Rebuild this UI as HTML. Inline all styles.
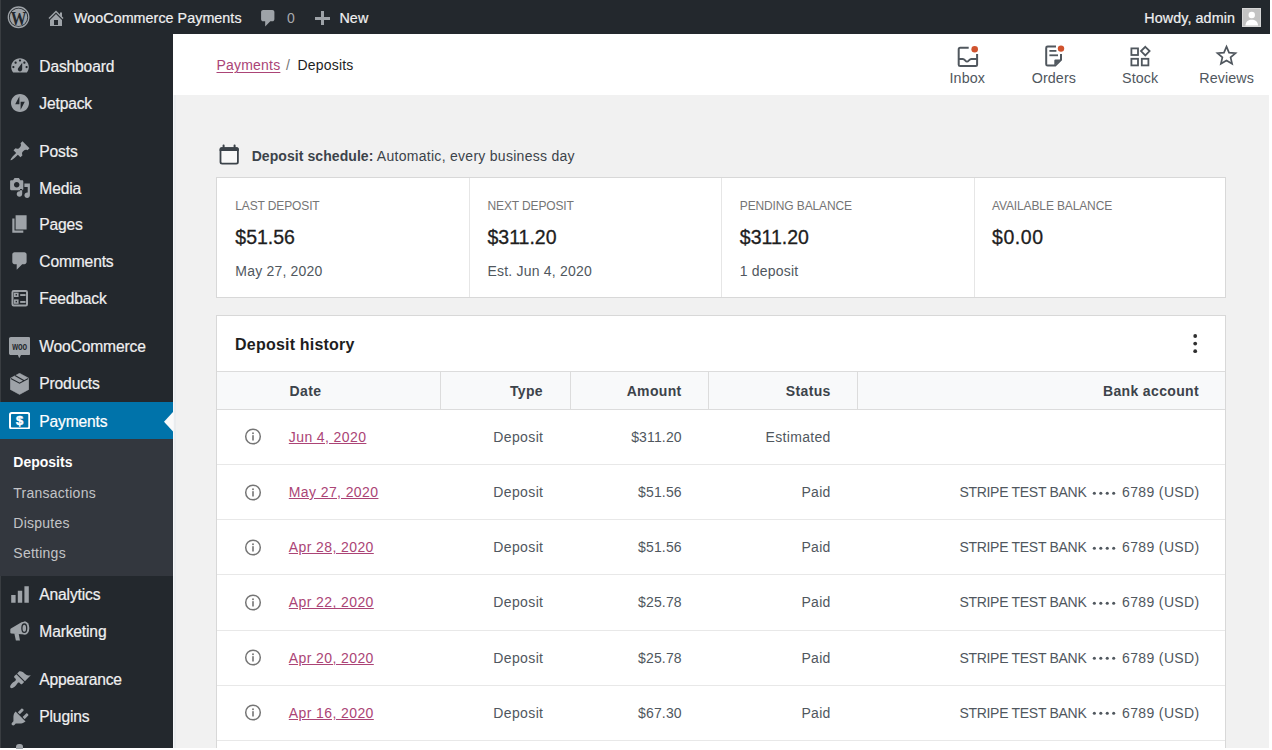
<!DOCTYPE html>
<html><head><meta charset="utf-8"><style>
html,body{margin:0;padding:0;width:1272px;height:750px;overflow:hidden;background:#fff;font-family:"Liberation Sans", sans-serif;}
.t{position:absolute;white-space:nowrap;}
.r{position:absolute;}
</style></head><body>
<div class="r" style="left:0px;top:0px;width:1272px;height:750px;background:#fff"></div>
<div class="r" style="left:0px;top:0px;width:1269px;height:748px;background:#f1f1f1"></div>
<div class="r" style="left:0px;top:0px;width:1270px;height:34px;background:#23282d"></div>
<div class="r" style="left:0px;top:34px;width:173px;height:714px;background:#23282d"></div>
<div class="r" style="left:173px;top:34px;width:1px;height:714px;background:#f5f7f9"></div>
<div class="r" style="left:174px;top:94px;width:2px;height:654px;background:#eaecee"></div>
<div class="r" style="left:0px;top:0px;width:1px;height:748px;background:#393d41"></div>
<div class="r" style="left:173px;top:34px;width:1097px;height:61px;background:#fff"></div>
<div class="t" style="left:74px;top:10.07px;font-size:14.3px;line-height:17.16px;color:#f0f0f1;font-weight:normal;letter-spacing:0.05px;-webkit-text-stroke:0.2px currentColor;">WooCommerce Payments</div>
<div class="t" style="left:287px;top:10.35px;font-size:14px;line-height:16.8px;color:#a7aaad;font-weight:normal;letter-spacing:0px;">0</div>
<div class="t" style="left:339.5px;top:10.07px;font-size:14.3px;line-height:17.16px;color:#f0f0f1;font-weight:normal;letter-spacing:0.05px;-webkit-text-stroke:0.2px currentColor;">New</div>
<div class="t" style="right:37px;text-align:right;top:10.07px;font-size:14.3px;line-height:17.16px;color:#f0f0f1;font-weight:normal;letter-spacing:0.1px;-webkit-text-stroke:0.2px currentColor;">Howdy, admin</div>
<div class="r" style="left:0px;top:402px;width:173px;height:37px;background:#0073aa"></div>
<div class="r" style="left:0px;top:439px;width:173px;height:137px;background:#33373e"></div>
<div class="t" style="left:39.3px;top:57.73px;font-size:15.6px;line-height:18.72px;color:#f0f0f1;font-weight:normal;letter-spacing:-0.15px;-webkit-text-stroke:0.2px currentColor;">Dashboard</div>
<div class="t" style="left:39.3px;top:94.53px;font-size:15.6px;line-height:18.72px;color:#f0f0f1;font-weight:normal;letter-spacing:-0.15px;-webkit-text-stroke:0.2px currentColor;">Jetpack</div>
<div class="t" style="left:39.3px;top:142.53px;font-size:15.6px;line-height:18.72px;color:#f0f0f1;font-weight:normal;letter-spacing:-0.15px;-webkit-text-stroke:0.2px currentColor;">Posts</div>
<div class="t" style="left:39.3px;top:179.73px;font-size:15.6px;line-height:18.72px;color:#f0f0f1;font-weight:normal;letter-spacing:-0.15px;-webkit-text-stroke:0.2px currentColor;">Media</div>
<div class="t" style="left:39.3px;top:215.93px;font-size:15.6px;line-height:18.72px;color:#f0f0f1;font-weight:normal;letter-spacing:-0.15px;-webkit-text-stroke:0.2px currentColor;">Pages</div>
<div class="t" style="left:39.3px;top:252.63px;font-size:15.6px;line-height:18.72px;color:#f0f0f1;font-weight:normal;letter-spacing:-0.15px;-webkit-text-stroke:0.2px currentColor;">Comments</div>
<div class="t" style="left:39.3px;top:289.63px;font-size:15.6px;line-height:18.72px;color:#f0f0f1;font-weight:normal;letter-spacing:-0.15px;-webkit-text-stroke:0.2px currentColor;">Feedback</div>
<div class="t" style="left:39.3px;top:338.43px;font-size:15.6px;line-height:18.72px;color:#f0f0f1;font-weight:normal;letter-spacing:-0.15px;-webkit-text-stroke:0.2px currentColor;">WooCommerce</div>
<div class="t" style="left:39.3px;top:374.83px;font-size:15.6px;line-height:18.72px;color:#f0f0f1;font-weight:normal;letter-spacing:-0.15px;-webkit-text-stroke:0.2px currentColor;">Products</div>
<div class="t" style="left:39.3px;top:412.73px;font-size:15.6px;line-height:18.72px;color:#fff;font-weight:normal;letter-spacing:-0.15px;-webkit-text-stroke:0.2px currentColor;">Payments</div>
<div class="t" style="left:13.3px;top:454.25px;font-size:14px;line-height:16.8px;color:#fff;font-weight:bold;letter-spacing:0px;">Deposits</div>
<div class="t" style="left:13.3px;top:484.65px;font-size:14px;line-height:16.8px;color:#c3c4c7;font-weight:normal;letter-spacing:0.25px;">Transactions</div>
<div class="t" style="left:13.3px;top:515.35px;font-size:14px;line-height:16.8px;color:#c3c4c7;font-weight:normal;letter-spacing:0.25px;">Disputes</div>
<div class="t" style="left:13.3px;top:545.45px;font-size:14px;line-height:16.8px;color:#c3c4c7;font-weight:normal;letter-spacing:0.25px;">Settings</div>
<div class="t" style="left:39.3px;top:585.93px;font-size:15.6px;line-height:18.72px;color:#f0f0f1;font-weight:normal;letter-spacing:-0.15px;-webkit-text-stroke:0.2px currentColor;">Analytics</div>
<div class="t" style="left:39.3px;top:622.63px;font-size:15.6px;line-height:18.72px;color:#f0f0f1;font-weight:normal;letter-spacing:-0.15px;-webkit-text-stroke:0.2px currentColor;">Marketing</div>
<div class="t" style="left:39.3px;top:671.13px;font-size:15.6px;line-height:18.72px;color:#f0f0f1;font-weight:normal;letter-spacing:-0.15px;-webkit-text-stroke:0.2px currentColor;">Appearance</div>
<div class="t" style="left:39.3px;top:708.33px;font-size:15.6px;line-height:18.72px;color:#f0f0f1;font-weight:normal;letter-spacing:-0.15px;-webkit-text-stroke:0.2px currentColor;">Plugins</div>
<div class="t" style="left:216.5px;top:57.35px;font-size:14px;line-height:16.8px;color:#ab4476;font-weight:normal;letter-spacing:0.2px;text-decoration:underline;text-underline-offset:2px;">Payments</div>
<div class="t" style="left:286px;top:57.35px;font-size:14px;line-height:16.8px;color:#757575;font-weight:normal;letter-spacing:0px;">/</div>
<div class="t" style="left:297.5px;top:57.35px;font-size:14px;line-height:16.8px;color:#1e1e1e;font-weight:normal;letter-spacing:0.2px;">Deposits</div>
<div class="t" style="left:867.3px;width:200px;text-align:center;top:70.47px;font-size:14.3px;line-height:17.16px;color:#50575e;font-weight:normal;letter-spacing:0.1px;">Inbox</div>
<div class="t" style="left:953.9000000000001px;width:200px;text-align:center;top:70.47px;font-size:14.3px;line-height:17.16px;color:#50575e;font-weight:normal;letter-spacing:0.1px;">Orders</div>
<div class="t" style="left:1040.15px;width:200px;text-align:center;top:70.47px;font-size:14.3px;line-height:17.16px;color:#50575e;font-weight:normal;letter-spacing:0.1px;">Stock</div>
<div class="t" style="left:1126.7px;width:200px;text-align:center;top:70.47px;font-size:14.3px;line-height:17.16px;color:#50575e;font-weight:normal;letter-spacing:0.1px;">Reviews</div>
<div class="t" style="left:251.7px;top:147.95px;font-size:14px;line-height:16.8px;color:#3c434a;font-weight:normal;letter-spacing:0.28px;"><b style="letter-spacing:0.07px">Deposit schedule:</b> Automatic, every business day</div>
<div class="r" style="left:216px;top:177px;width:1010px;height:121px;background:#fff;border:1px solid #d8d8d8;box-sizing:border-box"></div>
<div class="r" style="left:469px;top:178px;width:1px;height:119px;background:#e6e6e6"></div>
<div class="r" style="left:721px;top:178px;width:1px;height:119px;background:#e6e6e6"></div>
<div class="r" style="left:974px;top:178px;width:1px;height:119px;background:#e6e6e6"></div>
<div class="t" style="left:235.3px;top:199.24px;font-size:12px;line-height:14.4px;color:#757575;font-weight:normal;letter-spacing:-0.13px;">LAST DEPOSIT</div>
<div class="t" style="left:235.3px;top:226.14px;font-size:19.5px;line-height:23.4px;color:#1e1e1e;font-weight:normal;letter-spacing:0px;-webkit-text-stroke:0.3px #1e1e1e;">$51.56</div>
<div class="t" style="left:235.3px;top:262.75px;font-size:14px;line-height:16.8px;color:#50575e;font-weight:normal;letter-spacing:0.2px;">May 27, 2020</div>
<div class="t" style="left:487.5px;top:199.24px;font-size:12px;line-height:14.4px;color:#757575;font-weight:normal;letter-spacing:-0.13px;">NEXT DEPOSIT</div>
<div class="t" style="left:487.5px;top:226.14px;font-size:19.5px;line-height:23.4px;color:#1e1e1e;font-weight:normal;letter-spacing:0px;-webkit-text-stroke:0.3px #1e1e1e;">$311.20</div>
<div class="t" style="left:487.5px;top:262.75px;font-size:14px;line-height:16.8px;color:#50575e;font-weight:normal;letter-spacing:0.2px;">Est. Jun 4, 2020</div>
<div class="t" style="left:739.8px;top:199.24px;font-size:12px;line-height:14.4px;color:#757575;font-weight:normal;letter-spacing:-0.13px;">PENDING BALANCE</div>
<div class="t" style="left:739.8px;top:226.14px;font-size:19.5px;line-height:23.4px;color:#1e1e1e;font-weight:normal;letter-spacing:0px;-webkit-text-stroke:0.3px #1e1e1e;">$311.20</div>
<div class="t" style="left:739.8px;top:262.75px;font-size:14px;line-height:16.8px;color:#50575e;font-weight:normal;letter-spacing:0.2px;">1 deposit</div>
<div class="t" style="left:992px;top:199.24px;font-size:12px;line-height:14.4px;color:#757575;font-weight:normal;letter-spacing:-0.13px;">AVAILABLE BALANCE</div>
<div class="t" style="left:992px;top:226.14px;font-size:19.5px;line-height:23.4px;color:#1e1e1e;font-weight:normal;letter-spacing:0.55px;-webkit-text-stroke:0.3px #1e1e1e;">$0.00</div>
<div class="r" style="left:216px;top:315px;width:1010px;height:433px;background:#fff;border:1px solid #d8d8d8;border-bottom:none;box-sizing:border-box"></div>
<div class="t" style="left:235.1px;top:335.36px;font-size:16px;line-height:19.2px;color:#1e1e1e;font-weight:bold;letter-spacing:0.2px;">Deposit history</div>
<svg class="r" style="left:1185px;top:325px;" width="20" height="35" viewBox="0 0 20 35"><circle cx="10.2" cy="11" r="1.9" fill="#2f2f2f"/><circle cx="10.2" cy="18.6" r="1.9" fill="#2f2f2f"/><circle cx="10.2" cy="26.2" r="1.9" fill="#2f2f2f"/></svg>
<div class="r" style="left:217px;top:371px;width:1008px;height:39px;background:#f8f9fa;border-top:1px solid #dcdcdc;border-bottom:1px solid #dcdcdc;box-sizing:border-box"></div>
<div class="r" style="left:440px;top:372px;width:1px;height:37px;background:#dcdcdc"></div>
<div class="r" style="left:570px;top:372px;width:1px;height:37px;background:#dcdcdc"></div>
<div class="r" style="left:708px;top:372px;width:1px;height:37px;background:#dcdcdc"></div>
<div class="r" style="left:857px;top:372px;width:1px;height:37px;background:#dcdcdc"></div>
<div class="t" style="left:289.6px;top:383.35px;font-size:14px;line-height:16.8px;color:#3c434a;font-weight:bold;letter-spacing:0.4px;">Date</div>
<div class="t" style="right:729px;text-align:right;top:383.35px;font-size:14px;line-height:16.8px;color:#3c434a;font-weight:bold;letter-spacing:0.35px;">Type</div>
<div class="t" style="right:590.4px;text-align:right;top:383.35px;font-size:14px;line-height:16.8px;color:#3c434a;font-weight:bold;letter-spacing:0.35px;">Amount</div>
<div class="t" style="right:441.29999999999995px;text-align:right;top:383.35px;font-size:14px;line-height:16.8px;color:#3c434a;font-weight:bold;letter-spacing:0.35px;">Status</div>
<div class="t" style="right:73px;text-align:right;top:383.35px;font-size:14px;line-height:16.8px;color:#3c434a;font-weight:bold;letter-spacing:0.35px;">Bank account</div>
<svg class="r" style="left:244px;top:428.3px;" width="18" height="18" viewBox="0 0 18 18"><circle cx="9" cy="8.5" r="7.3" fill="none" stroke="#757575" stroke-width="1.5"/><rect x="8.2" y="7.2" width="1.6" height="5.3" fill="#757575"/><circle cx="9" cy="5.2" r="0.95" fill="#757575"/></svg>
<div class="t" style="left:288.8px;top:428.75px;font-size:14px;line-height:16.8px;color:#ab4476;font-weight:normal;letter-spacing:0.4px;text-decoration:underline;text-underline-offset:1px;">Jun 4, 2020</div>
<div class="t" style="right:728.63px;text-align:right;top:428.75px;font-size:14px;line-height:16.8px;color:#50575e;font-weight:normal;letter-spacing:0.37px;">Deposit</div>
<div class="t" style="right:590.26px;text-align:right;top:428.75px;font-size:14px;line-height:16.8px;color:#50575e;font-weight:normal;letter-spacing:0.14px;">$311.20</div>
<div class="t" style="right:441.28px;text-align:right;top:428.75px;font-size:14px;line-height:16.8px;color:#50575e;font-weight:normal;letter-spacing:0.32px;">Estimated</div>
<div class="r" style="left:217px;top:464px;width:1008px;height:1px;background:#e8e8e8"></div>
<svg class="r" style="left:244px;top:483.5px;" width="18" height="18" viewBox="0 0 18 18"><circle cx="9" cy="8.5" r="7.3" fill="none" stroke="#757575" stroke-width="1.5"/><rect x="8.2" y="7.2" width="1.6" height="5.3" fill="#757575"/><circle cx="9" cy="5.2" r="0.95" fill="#757575"/></svg>
<div class="t" style="left:288.8px;top:483.95px;font-size:14px;line-height:16.8px;color:#ab4476;font-weight:normal;letter-spacing:0.4px;text-decoration:underline;text-underline-offset:1px;">May 27, 2020</div>
<div class="t" style="right:728.63px;text-align:right;top:483.95px;font-size:14px;line-height:16.8px;color:#50575e;font-weight:normal;letter-spacing:0.37px;">Deposit</div>
<div class="t" style="right:590.26px;text-align:right;top:483.95px;font-size:14px;line-height:16.8px;color:#50575e;font-weight:normal;letter-spacing:0.14px;">$51.56</div>
<div class="t" style="right:441.28px;text-align:right;top:483.95px;font-size:14px;line-height:16.8px;color:#50575e;font-weight:normal;letter-spacing:0.32px;">Paid</div>
<div class="t" style="left:959.4px;top:483.95px;font-size:14px;line-height:16.8px;color:#50575e;font-weight:normal;letter-spacing:-0.29px;">STRIPE TEST BANK</div>
<div class="t" style="right:72.44000000000005px;text-align:right;top:483.95px;font-size:14px;line-height:16.8px;color:#50575e;font-weight:normal;letter-spacing:0.36px;">6789 (USD)</div>
<svg class="r" style="left:1090px;top:487.5px;" width="30" height="9" viewBox="0 0 30 9"><circle cx="4.35" cy="5.2" r="1.55" fill="#50575e"/><circle cx="10.80" cy="5.2" r="1.55" fill="#50575e"/><circle cx="17.25" cy="5.2" r="1.55" fill="#50575e"/><circle cx="23.70" cy="5.2" r="1.55" fill="#50575e"/></svg>
<div class="r" style="left:217px;top:519px;width:1008px;height:1px;background:#e8e8e8"></div>
<svg class="r" style="left:244px;top:538.6999999999999px;" width="18" height="18" viewBox="0 0 18 18"><circle cx="9" cy="8.5" r="7.3" fill="none" stroke="#757575" stroke-width="1.5"/><rect x="8.2" y="7.2" width="1.6" height="5.3" fill="#757575"/><circle cx="9" cy="5.2" r="0.95" fill="#757575"/></svg>
<div class="t" style="left:288.8px;top:539.15px;font-size:14px;line-height:16.8px;color:#ab4476;font-weight:normal;letter-spacing:0.4px;text-decoration:underline;text-underline-offset:1px;">Apr 28, 2020</div>
<div class="t" style="right:728.63px;text-align:right;top:539.15px;font-size:14px;line-height:16.8px;color:#50575e;font-weight:normal;letter-spacing:0.37px;">Deposit</div>
<div class="t" style="right:590.26px;text-align:right;top:539.15px;font-size:14px;line-height:16.8px;color:#50575e;font-weight:normal;letter-spacing:0.14px;">$51.56</div>
<div class="t" style="right:441.28px;text-align:right;top:539.15px;font-size:14px;line-height:16.8px;color:#50575e;font-weight:normal;letter-spacing:0.32px;">Paid</div>
<div class="t" style="left:959.4px;top:539.15px;font-size:14px;line-height:16.8px;color:#50575e;font-weight:normal;letter-spacing:-0.29px;">STRIPE TEST BANK</div>
<div class="t" style="right:72.44000000000005px;text-align:right;top:539.15px;font-size:14px;line-height:16.8px;color:#50575e;font-weight:normal;letter-spacing:0.36px;">6789 (USD)</div>
<svg class="r" style="left:1090px;top:542.7px;" width="30" height="9" viewBox="0 0 30 9"><circle cx="4.35" cy="5.2" r="1.55" fill="#50575e"/><circle cx="10.80" cy="5.2" r="1.55" fill="#50575e"/><circle cx="17.25" cy="5.2" r="1.55" fill="#50575e"/><circle cx="23.70" cy="5.2" r="1.55" fill="#50575e"/></svg>
<div class="r" style="left:217px;top:574px;width:1008px;height:1px;background:#e8e8e8"></div>
<svg class="r" style="left:244px;top:593.9px;" width="18" height="18" viewBox="0 0 18 18"><circle cx="9" cy="8.5" r="7.3" fill="none" stroke="#757575" stroke-width="1.5"/><rect x="8.2" y="7.2" width="1.6" height="5.3" fill="#757575"/><circle cx="9" cy="5.2" r="0.95" fill="#757575"/></svg>
<div class="t" style="left:288.8px;top:594.35px;font-size:14px;line-height:16.8px;color:#ab4476;font-weight:normal;letter-spacing:0.4px;text-decoration:underline;text-underline-offset:1px;">Apr 22, 2020</div>
<div class="t" style="right:728.63px;text-align:right;top:594.35px;font-size:14px;line-height:16.8px;color:#50575e;font-weight:normal;letter-spacing:0.37px;">Deposit</div>
<div class="t" style="right:590.26px;text-align:right;top:594.35px;font-size:14px;line-height:16.8px;color:#50575e;font-weight:normal;letter-spacing:0.14px;">$25.78</div>
<div class="t" style="right:441.28px;text-align:right;top:594.35px;font-size:14px;line-height:16.8px;color:#50575e;font-weight:normal;letter-spacing:0.32px;">Paid</div>
<div class="t" style="left:959.4px;top:594.35px;font-size:14px;line-height:16.8px;color:#50575e;font-weight:normal;letter-spacing:-0.29px;">STRIPE TEST BANK</div>
<div class="t" style="right:72.44000000000005px;text-align:right;top:594.35px;font-size:14px;line-height:16.8px;color:#50575e;font-weight:normal;letter-spacing:0.36px;">6789 (USD)</div>
<svg class="r" style="left:1090px;top:597.9000000000001px;" width="30" height="9" viewBox="0 0 30 9"><circle cx="4.35" cy="5.2" r="1.55" fill="#50575e"/><circle cx="10.80" cy="5.2" r="1.55" fill="#50575e"/><circle cx="17.25" cy="5.2" r="1.55" fill="#50575e"/><circle cx="23.70" cy="5.2" r="1.55" fill="#50575e"/></svg>
<div class="r" style="left:217px;top:630px;width:1008px;height:1px;background:#e8e8e8"></div>
<svg class="r" style="left:244px;top:649.0999999999999px;" width="18" height="18" viewBox="0 0 18 18"><circle cx="9" cy="8.5" r="7.3" fill="none" stroke="#757575" stroke-width="1.5"/><rect x="8.2" y="7.2" width="1.6" height="5.3" fill="#757575"/><circle cx="9" cy="5.2" r="0.95" fill="#757575"/></svg>
<div class="t" style="left:288.8px;top:649.55px;font-size:14px;line-height:16.8px;color:#ab4476;font-weight:normal;letter-spacing:0.4px;text-decoration:underline;text-underline-offset:1px;">Apr 20, 2020</div>
<div class="t" style="right:728.63px;text-align:right;top:649.55px;font-size:14px;line-height:16.8px;color:#50575e;font-weight:normal;letter-spacing:0.37px;">Deposit</div>
<div class="t" style="right:590.26px;text-align:right;top:649.55px;font-size:14px;line-height:16.8px;color:#50575e;font-weight:normal;letter-spacing:0.14px;">$25.78</div>
<div class="t" style="right:441.28px;text-align:right;top:649.55px;font-size:14px;line-height:16.8px;color:#50575e;font-weight:normal;letter-spacing:0.32px;">Paid</div>
<div class="t" style="left:959.4px;top:649.55px;font-size:14px;line-height:16.8px;color:#50575e;font-weight:normal;letter-spacing:-0.29px;">STRIPE TEST BANK</div>
<div class="t" style="right:72.44000000000005px;text-align:right;top:649.55px;font-size:14px;line-height:16.8px;color:#50575e;font-weight:normal;letter-spacing:0.36px;">6789 (USD)</div>
<svg class="r" style="left:1090px;top:653.1px;" width="30" height="9" viewBox="0 0 30 9"><circle cx="4.35" cy="5.2" r="1.55" fill="#50575e"/><circle cx="10.80" cy="5.2" r="1.55" fill="#50575e"/><circle cx="17.25" cy="5.2" r="1.55" fill="#50575e"/><circle cx="23.70" cy="5.2" r="1.55" fill="#50575e"/></svg>
<div class="r" style="left:217px;top:685px;width:1008px;height:1px;background:#e8e8e8"></div>
<svg class="r" style="left:244px;top:704.3px;" width="18" height="18" viewBox="0 0 18 18"><circle cx="9" cy="8.5" r="7.3" fill="none" stroke="#757575" stroke-width="1.5"/><rect x="8.2" y="7.2" width="1.6" height="5.3" fill="#757575"/><circle cx="9" cy="5.2" r="0.95" fill="#757575"/></svg>
<div class="t" style="left:288.8px;top:704.75px;font-size:14px;line-height:16.8px;color:#ab4476;font-weight:normal;letter-spacing:0.4px;text-decoration:underline;text-underline-offset:1px;">Apr 16, 2020</div>
<div class="t" style="right:728.63px;text-align:right;top:704.75px;font-size:14px;line-height:16.8px;color:#50575e;font-weight:normal;letter-spacing:0.37px;">Deposit</div>
<div class="t" style="right:590.26px;text-align:right;top:704.75px;font-size:14px;line-height:16.8px;color:#50575e;font-weight:normal;letter-spacing:0.14px;">$67.30</div>
<div class="t" style="right:441.28px;text-align:right;top:704.75px;font-size:14px;line-height:16.8px;color:#50575e;font-weight:normal;letter-spacing:0.32px;">Paid</div>
<div class="t" style="left:959.4px;top:704.75px;font-size:14px;line-height:16.8px;color:#50575e;font-weight:normal;letter-spacing:-0.29px;">STRIPE TEST BANK</div>
<div class="t" style="right:72.44000000000005px;text-align:right;top:704.75px;font-size:14px;line-height:16.8px;color:#50575e;font-weight:normal;letter-spacing:0.36px;">6789 (USD)</div>
<svg class="r" style="left:1090px;top:708.3px;" width="30" height="9" viewBox="0 0 30 9"><circle cx="4.35" cy="5.2" r="1.55" fill="#50575e"/><circle cx="10.80" cy="5.2" r="1.55" fill="#50575e"/><circle cx="17.25" cy="5.2" r="1.55" fill="#50575e"/><circle cx="23.70" cy="5.2" r="1.55" fill="#50575e"/></svg>
<div class="r" style="left:217px;top:740px;width:1008px;height:1px;background:#e8e8e8"></div>
<svg class="r" style="left:4.00px;top:4.00px;" width="30" height="28" viewBox="4 4 30 28"><circle cx="18.55" cy="17.25" r="10.25" fill="none" stroke="#9ea3a8" stroke-width="1.3"/><circle cx="18.55" cy="17.25" r="8.7" fill="#9ea3a8"/><text x="10.7" y="25.3" font-family="Liberation Serif" font-weight="bold" font-size="18.5" fill="#23282d" textLength="15.7" lengthAdjust="spacingAndGlyphs">W</text></svg>
<svg class="r" style="left:46.00px;top:7.50px;" width="20" height="20" viewBox="0 0 20 20"><path fill="#9ea3a8" fill-rule="nonzero" d="M16 8.5l1.53 1.53-1.06 1.06L10 4.62l-6.47 6.47-1.06-1.06L10 2.5l4 4v-2h2v4zm-6-2.46l6 5.99V18H4v-5.97zM12 17v-5H8v5h4z"/></svg>
<svg class="r" style="left:257.95px;top:8.25px;" width="20.5" height="20.5" viewBox="0 0 20 20"><path fill="#9ea3a8" fill-rule="nonzero" d="M5 2h9c1.1 0 2 .9 2 2v7c0 1.1-.9 2-2 2h-2l-5 5v-5H5c-1.1 0-2-.9-2-2V4c0-1.1.9-2 2-2z"/></svg>
<div class="r" style="left:315px;top:16.5px;width:14.7px;height:3px;background:#9ea3a8"></div>
<div class="r" style="left:320.9px;top:10.7px;width:3px;height:14.3px;background:#9ea3a8"></div>
<div class="r" style="left:1241.6px;top:7.8px;width:19.5px;height:19.5px;background:#c3c3c3;border:1px solid #d6d6d6;box-sizing:border-box"></div>
<svg class="r" style="left:1241.60px;top:7.80px;" width="19.5" height="19.5" viewBox="0 0 20 20"><circle cx="10" cy="7.2" r="3.3" fill="#fff"/><path d="M3.5 18 C4 13.5 6.5 12 10 12 C13.5 12 16 13.5 16.5 18 Z" fill="#fff"/></svg>
<svg class="r" style="left:8.90px;top:55.20px;" width="22" height="22" viewBox="0 0 20 20"><path fill="#9ea3a8" fill-rule="evenodd" d="M3.76 16h12.48c1.1-1.37 1.76-3.11 1.76-5 0-4.42-3.58-8-8-8s-8 3.58-8 8c0 1.89.66 3.63 1.76 5zM10 4c.55 0 1 .45 1 1s-.45 1-1 1-1-.45-1-1 .45-1 1-1zM6 6c.55 0 1 .45 1 1s-.45 1-1 1-1-.45-1-1 .45-1 1-1zm8 0c.55 0 1 .45 1 1s-.45 1-1 1-1-.45-1-1 .45-1 1-1zm-5.37 5.55L12 7v6c0 1.1-.9 2-2 2s-2-.9-2-2c0-.57.24-1.08.63-1.45zM4 10c.55 0 1 .45 1 1s-.45 1-1 1-1-.45-1-1 .45-1 1-1zm12 0c.55 0 1 .45 1 1s-.45 1-1 1-1-.45-1-1 .45-1 1-1z"/></svg>
<svg class="r" style="left:9.90px;top:93.00px;" width="20" height="20" viewBox="0 0 20 20"><path fill="#9ea3a8" fill-rule="evenodd" d="M10 1C5 1 1 5 1 10s4 9 9 9 9-4 9-9-4-9-9-9zM9.4 11.3H5.2L9.4 3.2zM10.6 16.8V8.7h4.2z"/></svg>
<svg class="r" style="left:8.90px;top:140.00px;" width="22" height="22" viewBox="0 0 20 20"><path fill="#9ea3a8" fill-rule="nonzero" d="M10.44 3.02l1.82-1.82 6.36 6.35-1.83 1.82c-1.05-.68-2.48-.57-3.41.36l-.75.75c-.92.93-1.04 2.35-.35 3.41l-1.830 1.82-2.41-2.41-2.8 2.79c-.42.42-3.38 2.71-3.8 2.29s1.86-3.39 2.28-3.81l2.79-2.79L4.1 9.36l1.83-1.82c1.05.69 2.48.57 3.4-.36l.75-.75c.93-.92 1.05-2.35.36-3.41z"/></svg>
<svg class="r" style="left:8.90px;top:177.20px;" width="22" height="22" viewBox="0 0 20 20"><path fill="#9ea3a8" fill-rule="evenodd" d="M13 11V4c0-.55-.45-1-1-1h-1.67L9 1H5L3.67 3H2c-.55 0-1 .45-1 1v7c0 .55.45 1 1 1h10c.55 0 1-.45 1-1zM7 4.5c1.38 0 2.5 1.12 2.5 2.5S8.38 9.5 7 9.5 4.5 8.38 4.5 7 5.62 4.5 7 4.5zM14 6h5v10.5c0 1.38-1.12 2.5-2.5 2.5S14 17.88 14 16.5s1.12-2.5 2.5-2.5c.17 0 .34.02.5.05V9h-3V6zm-4 8.05V11h2v4.5c0 1.38-1.12 2.5-2.5 2.5S7 16.88 7 15.5 8.12 13 9.5 13c.17 0 .34.02.5.05z"/></svg>
<svg class="r" style="left:8.90px;top:213.40px;" width="22" height="22" viewBox="0 0 20 20"><path fill="#9ea3a8" fill-rule="nonzero" d="M6 15V2h10v13H6zm-1 1h8v2H3V5h2v11z"/></svg>
<svg class="r" style="left:8.90px;top:250.10px;" width="22" height="22" viewBox="0 0 20 20"><path fill="#9ea3a8" fill-rule="nonzero" d="M5 2h9c1.1 0 2 .9 2 2v7c0 1.1-.9 2-2 2h-2l-5 5v-5H5c-1.1 0-2-.9-2-2V4c0-1.1.9-2 2-2z"/></svg>
<svg class="r" style="left:10.00px;top:288.00px;" width="20" height="20" viewBox="10 288 20 20"><rect x="12.5" y="291" width="14.5" height="14.5" rx="1.2" fill="none" stroke="#9ea3a8" stroke-width="2"/><rect x="14" y="292.6" width="4.6" height="4.4" fill="#9ea3a8"/><rect x="14" y="299.4" width="4.6" height="4.4" fill="#9ea3a8"/><rect x="15.6" y="294.1" width="1.4" height="1.4" fill="#23282d"/><rect x="15.6" y="300.9" width="1.4" height="1.4" fill="#23282d"/><rect x="20.2" y="294.1" width="5.4" height="1.9" fill="#9ea3a8"/><rect x="20.2" y="301" width="5.4" height="1.9" fill="#9ea3a8"/></svg>
<svg class="r" style="left:8.80px;top:336.70px;" width="21.5" height="21.5" viewBox="0 0 21.5 21.5"><path d="M1.8 0h17.9c1 0 1.8.8 1.8 1.8v14.4c0 1-.8 1.8-1.8 1.8h-7.7l-1.8 3.3-1.3-3.3H1.8c-1 0-1.8-.8-1.8-1.8V1.8C0 .8.8 0 1.8 0z" fill="#9ea3a8"/><text x="3.2" y="12.6" font-family="Liberation Sans" font-weight="bold" font-size="10" fill="#23282d" textLength="15" lengthAdjust="spacingAndGlyphs">woo</text></svg>
<svg class="r" style="left:9.90px;top:373.00px;" width="19.1" height="21.7" viewBox="0 0 19.1 21.7"><path d="M9.55 0.3L18.8 5.3V16.4L9.55 21.4L0.3 16.4V5.3Z" fill="#9ea3a8" stroke="#9ea3a8" stroke-width="0.6" stroke-linejoin="round"/><path d="M0.8 5.6L9.55 10.2L18.3 5.6M5 2.6L13.8 7.6" stroke="#23282d" stroke-width="1.1" fill="none"/></svg>
<svg class="r" style="left:8.80px;top:411.90px;" width="21.3" height="17.6" viewBox="0 0 21.3 17.6"><rect x="1" y="1" width="19.3" height="15.6" rx="1.8" fill="none" stroke="#fff" stroke-width="2"/><text x="10.65" y="13.4" text-anchor="middle" font-family="Liberation Sans" font-weight="bold" font-size="13" fill="#fff" stroke="#fff" stroke-width="0.5">$</text></svg>
<svg class="r" style="left:164.00px;top:412.00px;" width="9" height="19.5" viewBox="0 0 9 19.5"><path d="M9 0V19.5L0 9.75Z" fill="#fafafa"/></svg>
<svg class="r" style="left:8.90px;top:583.40px;" width="22" height="22" viewBox="0 0 20 20"><path fill="#9ea3a8" fill-rule="nonzero" d="M18 3v15h-4V3h4zM12 7v11H8V7h4zM6 11v7H2v-7h4z"/></svg>
<svg class="r" style="left:5.00px;top:615.00px;" width="30" height="30" viewBox="5 615 30 30"><path d="M10.3 629.6Q10.3 628.6 11.3 628.2L21.5 622.2 L25.5 621.6 L25.5 634.6 L21.5 634.3 L11.3 633.6Q10.3 633.3 10.3 632.4Z" fill="#9ea3a8"/><ellipse cx="25" cy="628" rx="4.3" ry="6.6" fill="#9ea3a8"/><ellipse cx="24.3" cy="628.2" rx="2.4" ry="4.2" fill="#9ea3a8" stroke="#23282d" stroke-width="1.3"/><path d="M14.3 633.2H18.6L20 640.6H15.9Z" fill="#9ea3a8"/></svg>
<svg class="r" style="left:8.90px;top:669.30px;" width="22" height="22" viewBox="0 0 20 20"><path fill="#9ea3a8" fill-rule="nonzero" d="M14.48 11.06L7.41 3.99l1.5-1.5c.5-.56 2.3-.47 3.51.32 1.21.8 1.43 1.28 2.91 2.1 1.18.64 2.45 1.26 4.45.85zm-.71.71L6.7 4.7 4.93 6.47c-.39.39-.39 1.02 0 1.41l1.06 1.06c.39.39.39 1.03 0 1.42-.6.6-1.43 1.11-2.21 1.69-.35.26-.7.53-1.01.84C1.430 14.23.4 16.08 1.4 17.07c.99 1 2.84-.03 4.18-1.36.31-.31.58-.66.85-1.02.57-.78 1.08-1.61 1.69-2.21.39-.39 1.02-.39 1.410 0l1.06 1.06c.39.39 1.02.39 1.41 0z"/></svg>
<svg class="r" style="left:8.90px;top:705.80px;" width="22" height="22" viewBox="0 0 20 20"><path fill="#9ea3a8" fill-rule="nonzero" d="M13.11 4.36L9.87 7.6 8 5.73l3.24-3.24c.35-.34 1.05-.2 1.56.32.52.51.66 1.21.31 1.55zm-8 1.77l.91-1.12 9.01 9.01-1.19.84c-.71.71-2.63 1.16-3.820 1.16H6.14L4.9 17.26c-.59.59-1.54.59-2.12 0-.59-.58-.59-1.53 0-2.12l1.24-1.24v-3.88c0-1.13.4-3.19 1.09-3.89zm7.26 3.970l3.24-3.24c.34-.35 1.04-.21 1.55.31.52.51.66 1.21.31 1.55l-3.24 3.25z"/></svg>
<div class="r" style="left:16px;top:744px;width:6.5px;height:5px;background:#9ea3a8;border-radius:3px 3px 0 0"></div>
<svg class="r" style="left:956.00px;top:45.00px;" width="24" height="24" viewBox="0 0 24 24"><path d="M12.7 2.7H4.2C3.4 2.7 2.7 3.4 2.7 4.2v15.5c0 .8.7 1.4 1.5 1.4h15.5c.8 0 1.4-.6 1.4-1.4V9" fill="none" stroke="#50575e" stroke-width="2"/><path d="M2.8 14H6.8C9 14 9.2 16.6 11 16.6S13.2 14 15.3 14H21" fill="none" stroke="#50575e" stroke-width="1.9"/><circle cx="18.7" cy="4.3" r="3.3" fill="#d0532e"/></svg>
<svg class="r" style="left:1040.00px;top:40.00px;" width="30" height="30" viewBox="1040 40 30 30"><path d="M1056 46.6H1047.6Q1046.2 46.6 1046.2 48V64.2Q1046.2 65.6 1047.6 65.6H1055.3L1061 59.9V54" fill="none" stroke="#50575e" stroke-width="2"/><path d="M1054.3 65.6V60.7Q1054.3 59.5 1055.5 59.5H1061Z" fill="#50575e"/><rect x="1049.4" y="50" width="7" height="1.8" fill="#50575e"/><rect x="1049.4" y="54.4" width="8.6" height="1.8" fill="#50575e"/><circle cx="1061" cy="48.6" r="3.2" fill="#d0532e"/></svg>
<svg class="r" style="left:1129.00px;top:45.00px;" width="24" height="24" viewBox="0 0 24 24"><rect x="2.4" y="3.4" width="6.6" height="6.6" fill="none" stroke="#50575e" stroke-width="1.8"/><rect x="2.4" y="13.8" width="6.6" height="6.6" fill="none" stroke="#50575e" stroke-width="1.8"/><rect x="12.8" y="13.8" width="6.6" height="6.6" fill="none" stroke="#50575e" stroke-width="1.8"/><path d="M16.3 1.8L20.6 6.1 16.3 10.4 12 6.1Z" fill="none" stroke="#50575e" stroke-width="1.8"/></svg>
<svg class="r" style="left:1211.00px;top:40.00px;" width="30" height="30" viewBox="1211 40 30 30"><path d="M1226.50 46.60 L1229.03 52.62 L1235.54 53.16 L1230.59 57.43 L1232.08 63.79 L1226.50 60.40 L1220.92 63.79 L1222.41 57.43 L1217.46 53.16 L1223.97 52.62Z" fill="none" stroke="#50575e" stroke-width="1.7" stroke-linejoin="miter" stroke-miterlimit="10"/></svg>
<svg class="r" style="left:214.00px;top:140.00px;" width="30" height="30" viewBox="214 140 30 30"><rect x="220.5" y="148.1" width="17.4" height="15.6" rx="1.6" fill="#f8f8f8" stroke="#3c434a" stroke-width="1.8"/><path d="M219.6 150.9V148.9Q219.6 147.2 221.3 147.2H237.1Q238.8 147.2 238.8 148.9V150.9Z" fill="#3c434a"/><rect x="222.6" y="144.6" width="2" height="3.5" rx="0.8" fill="#3c434a"/><rect x="233.6" y="144.6" width="2" height="3.5" rx="0.8" fill="#3c434a"/></svg>
</body></html>
